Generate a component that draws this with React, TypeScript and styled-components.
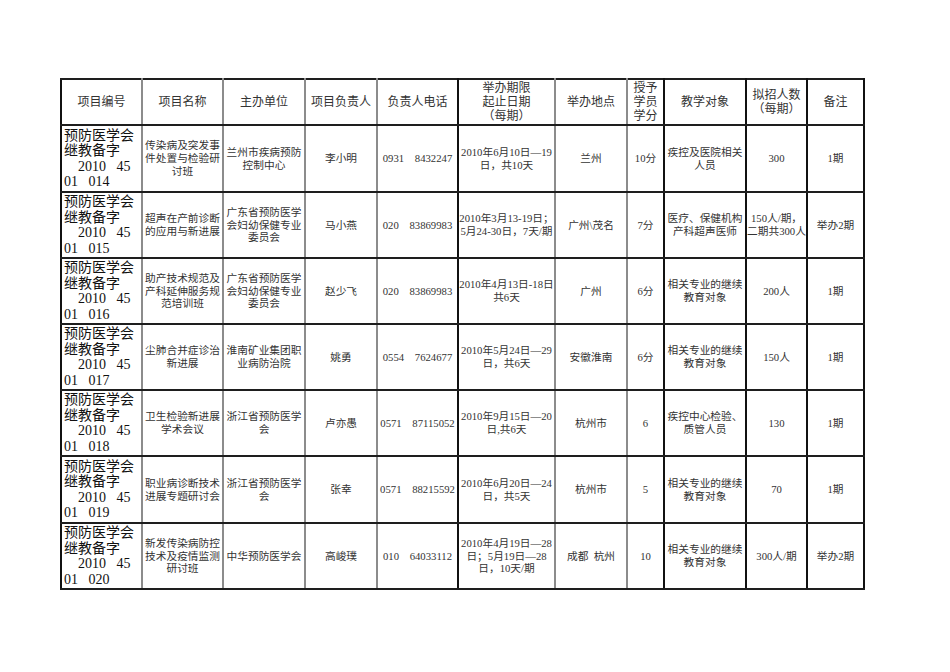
import React from "react";
import styled, { createGlobalStyle } from "styled-components";

const GlobalStyle = createGlobalStyle`
  html, body {
    margin: 0;
    padding: 0;
    background: #ffffff;
  }
  body {
    font-family: "Liberation Serif", "Noto Sans CJK SC", serif;
    color: #000;
  }
`;

const Page = styled.div`
  padding: 78px 0 0 60px;
`;

const Sheet = styled.table`
  border-collapse: collapse;
  table-layout: fixed;
  width: 805px;
`;

const Row = styled.tr<{ $h: number }>`
  height: ${({ $h }) => $h}px;
`;

const line = (dark?: boolean) => (dark ? "2px solid #111" : "2px solid #8c8c8c");

const HeadCell = styled.th<{ $dark?: boolean; $first?: boolean }>`
  border-top: 2px solid #1e1e1e;
  border-bottom: 2px solid #1e1e1e;
  border-right: ${({ $dark }) => line($dark)};
  border-left: ${({ $first }) => ($first ? line(true) : "none")};
  padding: 0 1px;
  font-weight: normal;
  font-size: 12px;
  line-height: 14px;
  color: #333;
  text-align: center;
  vertical-align: middle;
  white-space: pre;
`;

const Cell = styled.td<{ $dark?: boolean; $first?: boolean }>`
  border-top: 2px solid #1e1e1e;
  border-bottom: 2px solid #1e1e1e;
  border-right: ${({ $dark }) => line($dark)};
  border-left: ${({ $first }) => ($first ? line(true) : "none")};
  padding: 0;
  font-size: 10.7px;
  line-height: 12.7px;
  color: #333;
  text-align: center;
  vertical-align: middle;
  white-space: pre;
  overflow: hidden;
`;

const CodeCell = styled(Cell)`
  padding: 0 2px;
  font-size: 14px;
  line-height: 15.5px;
  color: #111;
  text-align: left;
`;

const Phone = styled.span`
  white-space: pre;
`;

const columns = [
  { w: 81, dark: false },
  { w: 81, dark: false },
  { w: 82, dark: false },
  { w: 72, dark: false },
  { w: 81, dark: true },
  { w: 97, dark: false },
  { w: 72, dark: false },
  { w: 37, dark: true },
  { w: 82, dark: true },
  { w: 61, dark: true },
  { w: 57, dark: true },
];

const headers = [
  "项目编号",
  "项目名称",
  "主办单位",
  "项目负责人",
  "负责人电话",
  "举办期限\n起止日期\n（每期）",
  "举办地点",
  "授予\n学员\n学分",
  "教学对象",
  "拟招人数\n（每期）",
  "备注",
];

type Project = {
  no: string;
  name: string;
  host: string;
  lead: string;
  area: string;
  phone: string;
  dates: string;
  place: string;
  credit: string;
  target: string;
  count: string;
  note: string;
  h: number;
};

const projects: Project[] = [
  {
    no: "014",
    name: "传染病及突发事\n件处置与检验研\n讨班",
    host: "兰州市疾病预防\n控制中心",
    lead: "李小明",
    area: "0931",
    phone: "8432247",
    dates: "2010年6月10日—19\n日，共10天",
    place: "兰州",
    credit: "10分",
    target: "疾控及医院相关\n人员",
    count: "300",
    note: "1期",
    h: 67,
  },
  {
    no: "015",
    name: "超声在产前诊断\n的应用与新进展",
    host: "广东省预防医学\n会妇幼保健专业\n委员会",
    lead: "马小燕",
    area: "020",
    phone: "83869983",
    dates: "2010年3月13-19日；\n5月24-30日，7天/期",
    place: "广州\\茂名",
    credit: "7分",
    target: "医疗、保健机构\n产科超声医师",
    count: "150人/期，\n二期共300人",
    note: "举办2期",
    h: 66,
  },
  {
    no: "016",
    name: "助产技术规范及\n产科延伸服务规\n范培训班",
    host: "广东省预防医学\n会妇幼保健专业\n委员会",
    lead: "赵少飞",
    area: "020",
    phone: "83869983",
    dates: "2010年4月13日-18日\n共6天",
    place: "广州",
    credit: "6分",
    target: "相关专业的继续\n教育对象",
    count: "200人",
    note: "1期",
    h: 66,
  },
  {
    no: "017",
    name: "尘肺合并症诊治\n新进展",
    host: "淮南矿业集团职\n业病防治院",
    lead: "姚勇",
    area: "0554",
    phone: "7624677",
    dates: "2010年5月24日—29\n日，共6天",
    place: "安徽淮南",
    credit: "6分",
    target: "相关专业的继续\n教育对象",
    count: "150人",
    note: "1期",
    h: 66,
  },
  {
    no: "018",
    name: "卫生检验新进展\n学术会议",
    host: "浙江省预防医学\n会",
    lead: "卢亦愚",
    area: "0571",
    phone: "87115052",
    dates: "2010年9月15日—20\n日,共6天",
    place: "杭州市",
    credit: "6",
    target: "疾控中心检验、\n质管人员",
    count: "130",
    note: "1期",
    h: 66,
  },
  {
    no: "019",
    name: "职业病诊断技术\n进展专题研讨会",
    host: "浙江省预防医学\n会",
    lead: "张幸",
    area: "0571",
    phone: "88215592",
    dates: "2010年6月20日—24\n日，共5天",
    place: "杭州市",
    credit: "5",
    target: "相关专业的继续\n教育对象",
    count: "70",
    note: "1期",
    h: 67,
  },
  {
    no: "020",
    name: "新发传染病防控\n技术及疫情监测\n研讨班",
    host: "中华预防医学会",
    lead: "高峻璞",
    area: "010",
    phone: "64033112",
    dates: "2010年4月19日—28\n日；5月19日—28\n日，10天/期",
    place: "成都  杭州",
    credit: "10",
    target: "相关专业的继续\n教育对象",
    count: "300人/期",
    note: "举办2期",
    h: 66,
  },
];

export default function App() {
  return (
    <Page>
      <GlobalStyle />
      <Sheet>
        <colgroup>
          {columns.map((c, i) => (
            <col key={i} style={{ width: c.w }} />
          ))}
        </colgroup>
        <thead>
          <Row $h={46}>
            {headers.map((h, i) => (
              <HeadCell key={h} $dark={columns[i].dark} $first={i === 0}>
                {h}
              </HeadCell>
            ))}
          </Row>
        </thead>
        <tbody>
          {projects.map((p) => {
            const cells = [
              p.name,
              p.host,
              p.lead,
              null,
              p.dates,
              p.place,
              p.credit,
              p.target,
              p.count,
              p.note,
            ];
            return (
              <Row key={p.no} $h={p.h}>
                <CodeCell $first $dark={columns[0].dark}>
                  {"预防医学会\n继教备字\n    2010   45\n01   " + p.no}
                </CodeCell>
                {cells.map((c, i) => (
                  <Cell key={i} $dark={columns[i + 1].dark}>
                    {c === null ? <Phone>{p.area + "    " + p.phone}</Phone> : c}
                  </Cell>
                ))}
              </Row>
            );
          })}
        </tbody>
      </Sheet>
    </Page>
  );
}
